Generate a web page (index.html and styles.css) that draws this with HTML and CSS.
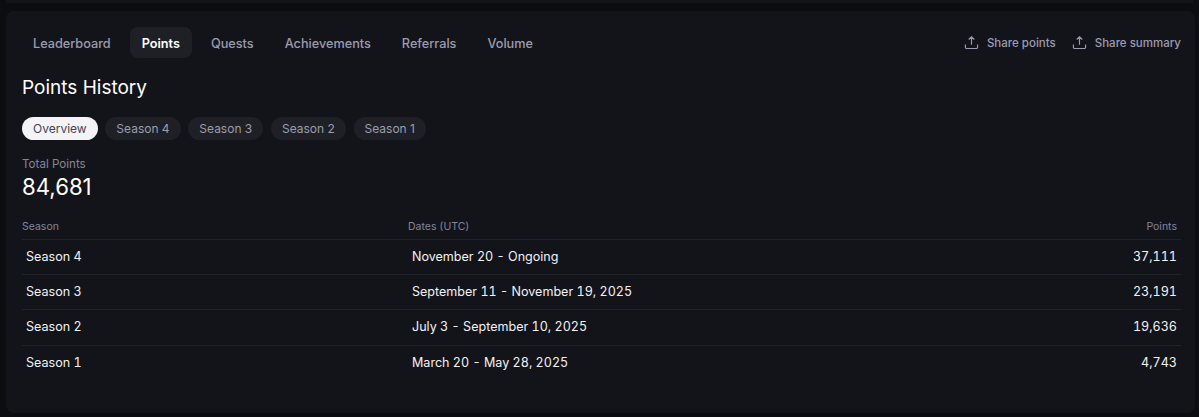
FILE: index.html
```html
<!DOCTYPE html>
<html lang="en">
<head>
  <meta charset="UTF-8">
  <title>Points History</title>
  <link rel="stylesheet" href="styles.css">
</head>
<body>
  <div class="top-strip"></div>
  <div class="card">
    <div class="nav-row">
      <div class="tabs">
        <a class="tab">Leaderboard</a>
        <a class="tab active">Points</a>
        <a class="tab">Quests</a>
        <a class="tab">Achievements</a>
        <a class="tab">Referrals</a>
        <a class="tab">Volume</a>
      </div>
      <div class="share">
        <a class="share-link">
          <svg width="15" height="15" viewBox="0 0 16 16" fill="none" stroke="currentColor" stroke-width="1.2"><path d="M8 10.5V2M5 4.8 8 1.9l3 2.9M1.5 10v3a1.4 1.4 0 0 0 1.4 1.4h10.2a1.4 1.4 0 0 0 1.4-1.4v-3"/></svg>
          Share points
        </a>
        <a class="share-link">
          <svg width="15" height="15" viewBox="0 0 16 16" fill="none" stroke="currentColor" stroke-width="1.2"><path d="M8 10.5V2M5 4.8 8 1.9l3 2.9M1.5 10v3a1.4 1.4 0 0 0 1.4 1.4h10.2a1.4 1.4 0 0 0 1.4-1.4v-3"/></svg>
          Share summary
        </a>
      </div>
    </div>

    <h2 class="title">Points History</h2>

    <div class="pills">
      <span class="pill selected">Overview</span>
      <span class="pill">Season 4</span>
      <span class="pill">Season 3</span>
      <span class="pill">Season 2</span>
      <span class="pill">Season 1</span>
    </div>

    <div class="total-label">Total Points</div>
    <div class="total-value">84,681</div>

    <table class="history">
      <thead>
        <tr><th class="col-season">Season</th><th class="col-dates">Dates (UTC)</th><th class="col-points">Points</th></tr>
      </thead>
      <tbody>
        <tr><td>Season 4</td><td>November 20 - Ongoing</td><td class="col-points">37,111</td></tr>
        <tr><td>Season 3</td><td>September 11 - November 19, 2025</td><td class="col-points">23,191</td></tr>
        <tr><td>Season 2</td><td>July 3 - September 10, 2025</td><td class="col-points">19,636</td></tr>
        <tr><td>Season 1</td><td>March 20 - May 28, 2025</td><td class="col-points">4,743</td></tr>
      </tbody>
    </table>
  </div>
</body>
</html>
```

FILE: styles.css
```css
* {
  box-sizing: border-box;
}
html, body {
  height: 100%;
}
body {
  margin: 0;
  background: #0c0d11;
  font-family: Inter, "Noto Sans", sans-serif;
  color: #fff;
  overflow: hidden;
}
.top-strip {
  height: 3px;
  margin: 0 6px 8px;
  background: #13141a;
}
.card {
  margin: 0 4px 0 6px;
  height: 402px;
  background: #13141a;
  border-radius: 8px;
  padding: 16px 14px 0 16px;
}
.nav-row {
  display: flex;
  justify-content: space-between;
  align-items: center;
}
.tabs {
  display: flex;
  gap: 7px;
  margin-left: -1px;
}
.tab {
  padding: 1px 12px 0;
  height: 31px;
  line-height: 31px;
  font-size: 12.7px;
  font-weight: 500;
  color: #9a9daf;
  border-radius: 8px;
}
.tab.active {
  background: #1f2026;
  color: #fff;
  font-weight: 600;
}
.share {
  display: flex;
  gap: 16px;
}
.share-link {
  display: flex;
  align-items: center;
  gap: 8px;
  font-size: 11.5px;
  font-weight: 500;
  color: #9a9daf;
}
.title {
  margin: 18px 0 0;
  font-size: 19px;
  line-height: 24px;
  font-weight: 400;
}
.pills {
  display: flex;
  gap: 7.7px;
  margin-top: 17px;
}
.pill {
  height: 23px;
  line-height: 24px;
  padding: 0 11px;
  border-radius: 12px;
  background: #1f2026;
  font-size: 12px;
  color: #9a9daf;
}
.pill.selected {
  background: #f4f4f6;
  color: #41434f;
}
.total-label {
  margin-top: 17px;
  font-size: 11.6px;
  line-height: 15px;
  color: #83869a;
}
.total-value {
  font-size: 22.2px;
  line-height: 29px;
}
.history {
  width: 100%;
  margin-top: 13px;
  border-collapse: collapse;
  font-size: 12.55px;
  font-variant-numeric: tabular-nums;
}
.history th {
  height: 25px;
  padding: 0;
  font-size: 10.5px;
  font-weight: 400;
  text-align: left;
  color: #83869a;
  border-bottom: 1px solid #22232a;
}
.history td {
  height: 35.4px;
  padding: 0 4px 1px;
  color: #f2f2f4;
  border-bottom: 1px solid #22232a;
}
.history tr:last-child td {
  border-bottom: none;
}
.col-season {
  width: 386px;
}
.history .col-points {
  text-align: right;
}
.history th.col-points {
  padding-right: 4px;
}
```
